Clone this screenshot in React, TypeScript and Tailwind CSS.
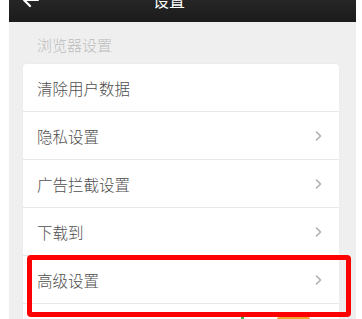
const rows = [
  { label: '清除用户数据', arrow: false },
  { label: '隐私设置', arrow: true },
  { label: '广告拦截设置', arrow: true },
  { label: '下载到', arrow: true },
  { label: '高级设置', arrow: true },
];

function Chevron() {
  return (
    <svg width="7" height="10" viewBox="0 0 7 10" fill="none" stroke="#b0b0b0" strokeWidth="1.6" strokeLinecap="round" strokeLinejoin="round">
      <path d="M1.5 1 L5.5 5 L1.5 9" />
    </svg>
  );
}

export default function App() {
  return (
    <div
      className="relative w-[362px] h-[319px] overflow-hidden bg-white flex"
      style={{ fontFamily: '"Noto Sans CJK SC", "Noto Sans", sans-serif' }}
    >
      <div className="w-[9px] shrink-0 bg-white" />
      <div className="w-[347px] shrink-0 flex flex-col bg-[#efefef]">
        {/* top bar */}
        <div className="relative h-[22px] overflow-hidden bg-gradient-to-b from-[#262626] to-[#1b1b1b]">
          <div className="-mt-[18px] h-[36px] flex items-center justify-center pr-[27px]">
            <span className="text-[16px] leading-none text-white">设置</span>
          </div>
          <svg className="absolute left-[13px] -top-[9px]" width="18" height="18" viewBox="0 0 18 18" fill="none" stroke="#ffffff" strokeWidth="2.2" strokeLinecap="round" strokeLinejoin="round">
            <path d="M16 9 H2 M8 3 L2 9 L8 15" />
          </svg>
        </div>

        {/* section header */}
        <div className="h-[42px] flex items-center pt-[5px] pl-[28px]">
          <span className="text-[15px] font-light text-[#bdbdbd]">浏览器设置</span>
        </div>

        {/* card */}
        <div className="ml-[14px] mr-[17px] flex-1 bg-white rounded-t-[3px] shadow-[0_0_1px_rgba(0,0,0,0.12)]">
          {rows.map((r) => (
            <div
              key={r.label}
              className="h-[48px] flex items-center justify-between pl-[14px] pr-[17px] border-b border-[#e8e8e8]"
            >
              <span className="text-[15.5px] font-light text-[#4d4d4d] pt-[2px]">{r.label}</span>
              {r.arrow && <Chevron />}
            </div>
          ))}
        </div>
      </div>
      <div className="w-[6px] shrink-0 bg-white" />

      {/* highlight */}
      <div className="absolute left-[27px] top-[255px] w-[324px] h-[62px] border-[5px] border-[#ff0000] rounded-[4px]" />
      <div className="absolute left-[241px] top-[317px] w-[3px] h-[2px] bg-[#2db83d]" />
      <div className="absolute left-[277px] top-[317px] w-[33px] h-[2px] rounded-t-full bg-[#f5a030]" />
    </div>
  );
}
